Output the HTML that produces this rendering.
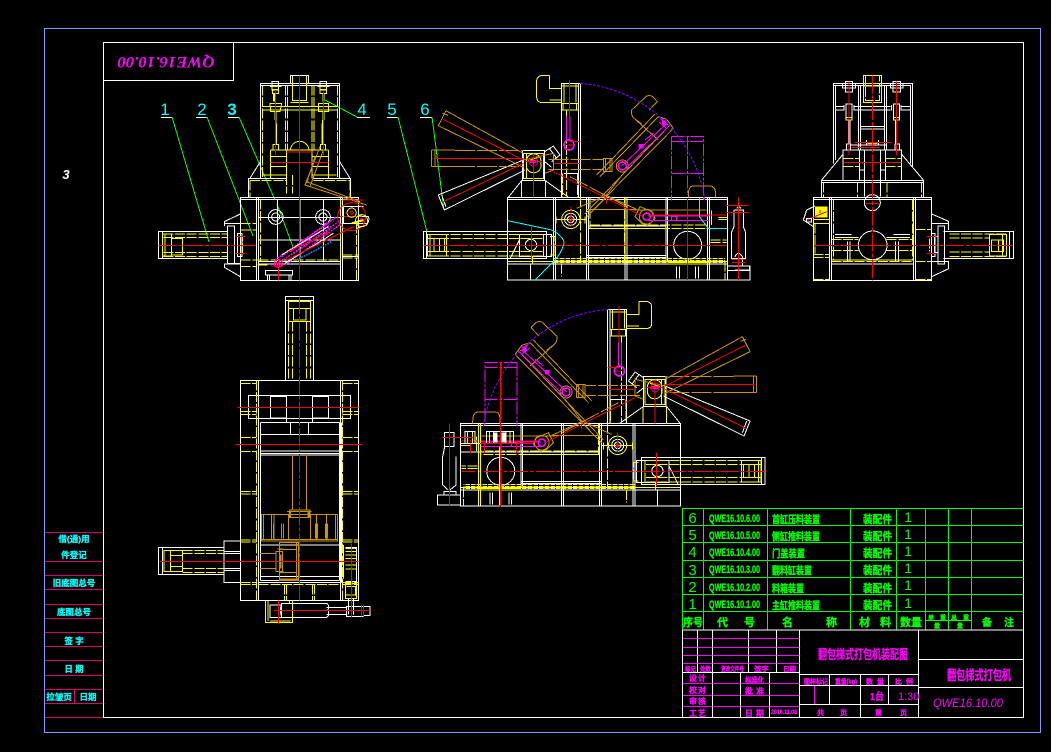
<!DOCTYPE html>
<html><head><meta charset="utf-8"><title>QWE16.10.00</title>
<style>
html,body{margin:0;padding:0;background:#000;width:1051px;height:752px;overflow:hidden}
svg{display:block}
text{font-family:"Liberation Sans","Noto Sans CJK SC",sans-serif}
.g text{fill:#0f0;stroke:#0f0;stroke-width:.35;font-weight:700}
.m text{fill:#f0f;stroke:#f0f;stroke-width:.3;font-weight:700}
.c text{fill:#0ff;stroke:#0ff;stroke-width:.3;font-weight:700;text-anchor:middle}
.w{stroke:#fff}.y{stroke:#ff0}.yd{stroke:#ff0;stroke-dasharray:30 5}.r{stroke:#f00;stroke-dasharray:55 6 12 6}
.rs{stroke:#f00}.o{stroke:#c89400}.od{stroke:#c89400;stroke-dasharray:60 6}.p{stroke:#f0f}.pd{stroke:#f0f;stroke-dasharray:40 5 8 5}
.pu{stroke:#7f00ff;stroke-dasharray:9 4}.cy{stroke:#0ff}
.v{fill:none;stroke-width:3}
</style></head><body>
<svg width="1051" height="752" viewBox="0 0 1051 752" xmlns="http://www.w3.org/2000/svg" shape-rendering="crispEdges">
<rect width="1051" height="752" fill="#000"/>
<defs>
<g id="side" class="v">
<!-- white body -->
<path class="w" d="M293,412H953V660H293Z M293,418H953 M430,412V660 M436,412V660 M530,412V660 M536,412V660 M645,412V660 M651,412V660 M768,412V604 M772,412V604 M893,412V660 M899,412V660 M535,498H770 M535,506H770 M530,587H770 M530,593H770 M293,604H953 M293,612H953 M772,604H893 M800,620V655 M808,620V655 M857,620V655 M865,620V655 M362,612V660"/>
<path class="w" d="M455,412V70H512V412 M505,70V412 M462,340H505 M40,515H410V596H40Z M50,515V596 M328,524H425V590H328V524 M300,596L328,540 M335,362V412 M406,362V412 M335,362H406 M337,360V272H404V360 M335,362L295,412 M406,362L476,412"/>
<circle class="w" cx="833" cy="556" r="42"/><circle class="w" cx="363" cy="555" r="17"/>
<circle class="w" cx="482" cy="478" r="18"/><circle class="w" cx="482" cy="478" r="10"/>
<!-- white open arm -->
<path class="w" d="M85,405L103,450L345,330 M85,405L340,300 M95,405L108,440 M404,275L430,258L450,285L425,305 M418,265L440,295 M404,305L425,322"/>
<!-- yellow -->
<path class="y" d="M418,46H395Q380,50 380,62V112Q380,126 395,128H455 M418,46V85H455 M418,120H455 M455,78H505 M462,70V128 M498,70V128 M455,130H505 M455,150H505 M459,130V150 M500,130V150 M52,524H110V588H52Z M60,524V588 M72,535H104V575H72Z M88,535V575 M340,280H400V355H340Z M350,280V355"/>
<path class="y" d="M432,596H945M432,602H945M432,608H945" stroke-dasharray="14 3" style="stroke:#ff0"/>
<path class="yd" d="M52,524H400 M52,535H400 M52,575H400 M52,588H400 M400,524V590 M420,530H435V585H420 M457,340V412 M503,340V412 M470,150V410 M335,368V412 M406,368V412 M512,412V600 M644,412V600 M540,412V505 M540,495H893 M540,505H893 M300,604H950 M945,604V660 M902,540H950 M902,548H950 M772,604H893 M368,590V612 M455,612V650"/>
<path class="y" d="M455,478A27,27 0 1 1 510,478A27,27 0 1 1 455,478 M435,478H530 M438,470V490 M525,470V490 M355,302L385,292 M350,310A22,22 0 1 0 392,310A22,22 0 1 0 350,310 M773,608H893 M773,612H893" />
<path class="y" d="M925,472H953 M925,478H953 M905,452V495"/>
<!-- orange open arm positions -->
<path class="o" d="M108,152L85,197L340,322 M108,152L340,280 M98,160L114,166 M65,270H135 M65,320H135 M75,270V320 M65,270V320 M340,300L430,280V330L405,340"/>
<path class="od" d="M135,272H340 M135,320H340 M415,298H580 M415,328H580 M480,350L650,440"/>
<path class="o" d="M580,296H606V334H580Z M586,296V334 M600,296V334 M790,205L530,470 M780,195L525,462 M745,170L570,350 M735,162L560,345 M770,178L790,205 M745,170L770,178 M665,150L710,108Q722,105 728,110L742,125L718,150 M665,150Q662,165 672,175L695,192 M672,175L745,240 M500,445L590,405 M590,405L640,340 M530,470L590,410 M670,450H890 M675,470L690,440L725,455L735,475L715,495L695,490Z M530,448H680 M586,405L680,448 M835,405Q835,378 850,378H900Q917,378 917,405V412 M835,412V405"/>
<circle class="o" cx="637" cy="318" r="18"/><circle class="o" cx="710" cy="470" r="22"/>
<!-- magenta -->
<path class="p" d="M635,318L770,190 M645,328L775,200 M750,175L775,195 M745,185L770,205 M705,240L730,220 M712,468H895 M712,482H895 M480,170V245 M470,170V245 M785,470H800V482H785Z"/>
<path class="pd" d="M784,230H880V422 M784,230V422 M784,245H880 M784,340H880 M832,230V405"/>
<g stroke="none" fill="#f0f"><circle cx="477" cy="255" r="15" fill="none" stroke="#f0f" stroke-width="5"/><circle cx="637" cy="318" r="12" fill="none" stroke="#f0f" stroke-width="5"/><circle cx="710" cy="470" r="11" fill="none" stroke="#f0f" stroke-width="5"/><rect x="686" y="252" width="14" height="14"/><rect x="756" y="182" width="14" height="14"/></g>
<!-- red -->
<path class="rs" d="M100,178L340,300 M72,296H340 M100,425L340,310 M345,305H395 M370,280V412 M478,60V175 M478,245H512 M473,255H490 M483,440V500 M365,500V600 M435,310H510 M430,335L700,470 M832,418V660 M590,412V430 M715,465H950"/>
<path class="r" d="M40,556H950 M370,360V412 M832,415V660"/>
<circle class="rs" cx="370" cy="305" r="13"/><circle class="rs" cx="482" cy="478" r="4"/>
<path class="p" d="M360,302H380M360,308H380" />
<!-- purple arc -->
<path class="pu" d="M510,70A408,408 0 0 1 885,425"/>
</g>
</defs>

<!-- frames -->
<rect x="44.500" y="28.500" width="996" height="704" fill="none" stroke="#7f9fff"/>
<rect x="103.500" y="42.500" width="920" height="675" fill="none" stroke="#fff"/>
<rect x="103.500" y="42.500" width="130" height="38" fill="none" stroke="#fff"/>
<text x="166" y="67" transform="rotate(180 166 62)" text-anchor="middle" font-size="16" font-style="italic" font-weight="700" fill="#f0f" textLength="97" lengthAdjust="spacingAndGlyphs" style="font-family:'Liberation Serif',serif">QWE16.10.00</text>
<text x="66" y="179" text-anchor="middle" font-size="13" font-style="italic" font-weight="700" fill="#fff">3</text>

<!-- left stamp -->
<path fill="none" stroke="#d8006c" d="M45,532.500H103M45,561.500H103M45,575.500H103M45,589.500H103M45,604.500H103M45,618.500H103M45,632.500H103M45,646.500H103M45,660.500H103M45,675.500H103M45,689.500H103M45,703.500H103M45,717.500H103M74.500,689V703"/>
<g class="c" font-size="8.500">
<text x="74" y="542">借(通)用</text>
<text x="74" y="558">件登记</text>
<text x="74" y="586">旧底图总号</text>
<text x="74" y="615">底图总号</text>
<text x="74" y="644">签 字</text>
<text x="74" y="672">日 期</text>
<text x="59" y="700">拉皱页</text>
<text x="88" y="700">日期</text>
</g>

<!-- balloons and leaders -->
<g fill="#0ff" font-size="17" text-anchor="middle">
<text x="165" y="115" style="font-family:'Liberation Sans',sans-serif">1</text>
<text x="202" y="115" style="font-family:'Liberation Sans',sans-serif">2</text>
<text x="232" y="115" font-weight="700" style="font-family:'Liberation Sans',sans-serif">3</text>
<text x="362" y="115" style="font-family:'Liberation Sans',sans-serif">4</text>
<text x="392" y="115" style="font-family:'Liberation Sans',sans-serif">5</text>
<text x="425" y="115" style="font-family:'Liberation Sans',sans-serif">6</text>
</g>
<path stroke="#fff" fill="none" d="M161,117.500H172M196,117.500H207M228,117.500H239M357,117.500H370M387,117.500H398M420,117.500H432"/>
<path stroke="#0f0" fill="none" d="M172,117L209,242M207,117L253,236M239,117L275,200M277,204L293,247M357,117L325,100M398,117L427,232M432,117L444,210"/>

<!-- VIEW 1 -->
<g class="v" transform="translate(150,60) scale(.33333)">
<path class="w" d="M331,355V70H569V355 M331,76H569 M421,70V46H476V70 M300,355L331,305 M600,355L569,305 M295,412V355H410 M490,355H602V412 M271,412H626V662H271Z M271,418H626 M320,412V662 M326,412V662 M572,412V662 M578,412V662 M326,472H572 M326,540H572 M326,604H572 M326,612H572 M382,418V604 M450,418V604 M520,418V604 M232,515H25V596H232 M37,515V596 M232,498H254V610H232Z M271,462L223,485V490H271 M271,650L223,622V612H271 M254,610H271 M223,490V498 M262,520H276V590H262Z M347,632H428V645H347Z M352,645V662 M358,645V662 M417,645V662 M423,645V662 M366,64H386V90H366Z M510,64H530V90H510Z M578,590H626 M578,440H640 M578,490L650,490"/>
<circle class="w" cx="377" cy="471" r="22"/><circle class="w" cx="377" cy="471" r="12"/><circle class="w" cx="519" cy="471" r="22"/><circle class="w" cx="519" cy="471" r="12"/>
<path class="y" d="M427,46V122H470V46 M421,128H476 M427,122H470 M361,270H536 M361,270V355 M536,270V355 M361,290H410 M486,290H536 M361,320H410 M486,320H536 M336,345H410 M486,345H560 M410,270V355 M486,270V355 M421,272A28,28 0 0 1 477,272 M337,140H563 M337,150H563 M360,130L395,130L390,155L362,155Z M505,130L535,130L535,155L505,155Z M378,180V252 M518,180V252 M369,254H385V270H369Z M511,254H527V270H511Z M368,88H386V100H368Z M510,88H530V100H510Z M360,80H395 M503,80H538 M37,522H65V588H37Z M45,522V588 M65,535H97V585H65Z"/>
<path stroke-width="6" class="y" d="M372,100V125 M520,100V125 M376,155V180 M520,155V180 M378,190V250 M518,190V250"/>
<path class="yd" d="M337,76V355 M563,76V355 M407,76V270 M413,76V270 M486,76V270 M492,76V270 M410,345V400 M427,345V400 M300,362H410 M490,362H600 M300,362V412 M600,362V412 M331,418V604 M572,418V604 M326,600H572 M40,522H232 M40,533H232 M40,577H232 M40,590H232 M272,490H320 M272,510H320 M272,600H330 M272,620H320 M578,440H626 M620,490V660 M578,585H626 M578,594H626 M262,530H278V580H262 M352,615H320"/>
<path class="o" d="M510,260L465,375L480,380L520,270 M465,375L650,435 M470,365L630,425"/>
<path class="od" d="M495,290L470,370"/>
<path class="r" d="M449,46V662 M25,556H320"/>
<path class="rs" d="M410,276H490 M361,308H536 M449,70V662 M377,90V285 M521,95V285 M257,530H285 M257,580H285 M385,600V662 M578,420H640 M570,470H650 M362,618H400"/>
<circle class="rs" cx="605" cy="470" r="42"/>
<path class="p" stroke-width="4" stroke-dasharray="6 3" d="M375,600L560,470 M385,610L570,482 M395,590L550,478 M405,615L575,490 M420,575L540,495 M415,590L545,505"/>
<path class="w" d="M395,585L535,500 M405,610L550,520"/>
<path stroke="#0080ff" stroke-width="5" stroke-dasharray="5 3" d="M440,600L545,545"/>
<path class="rs" d="M410,600L610,500 M415,575L540,515"/>
<circle class="p" cx="385" cy="610" r="12"/><circle class="rs" cx="385" cy="610" r="6"/>
<circle class="y" cx="605" cy="458" r="14"/><circle class="rs" cx="605" cy="458" r="5"/>
<path class="w" d="M580,440H625V490H580Z M625,468L655,470Q660,480 650,495L620,505"/>
<circle class="y" cx="635" cy="482" r="18"/><circle class="rs" cx="637" cy="480" r="6"/>
<path class="y" stroke-width="6" d="M605,490L640,480"/>
</g>

<!-- VIEW 2 & 5 -->
<use href="#side" transform="translate(410,60) scale(.33333)"/>
<use href="#side" transform="translate(778.400,286) scale(-.33333,.33333)"/>
<!-- cyan only in view 2 -->
<g class="v" transform="translate(410,60) scale(.33333)">
<path class="cy" d="M293,482L425,510Q462,530 462,550Q455,580 430,605L375,660 M868,412V470L895,505H953"/>
<path class="w" d="M975,618H1018V630H975 M952,618H1020V660H952Z M952,632H1020 M972,450H1000V500L1007,518V595H964V518L972,500V450 M975,590Q985,570 997,590V618 M980,445Q986,435 992,445"/>
<path class="rs" d="M985,412V660 M950,436H1016 M950,457H1016 M966,598H1006 M966,608H1006"/>
</g>
<!-- extras on view 5 -->
<g class="v" transform="translate(430,300) scale(.33333)">
<path class="w" d="M92,430H270 M92,456H270 M43,397H72V440H43Z M38,470L44,440 M38,470V555L55,570 M78,470V555L60,570 M23,585H92V615H23Z M42,575H78V585H42Z M105,395H135V430H105Z M170,395H250V430H170Z"/>
<path class="y" d="M113,395V430 M127,395V430 M178,395V430 M190,395V430 M228,395V430 M240,395V430 M145,370V610 M152,370V610 M208,440V615"/>
<path stroke="#fff" stroke-width="14" d="M196,398V428 M222,398V428"/>
<path class="rs" d="M58,370V620 M38,412H130 M150,430H310 M122,430V460 M163,430V460 M212,185V620 M260,430V460"/>
</g>

<!-- VIEW 3 -->
<g class="v" transform="translate(790,60) scale(.33333)">
<path class="w" d="M131,310V70H368V320 M137,300V76H362V310 M160,76H131 M205,76V270 M212,76V270 M283,76V270 M290,76V270 M137,140H162 M137,150H162 M192,140H302 M192,150H302 M332,140H362 M332,150H362 M212,200H283 M212,207H283 M159,270H335V362H159Z M223,270V410 M272,270V410 M208,270V362 M287,270V362 M208,330H223 M272,330H287 M95,412V362H400V412 M95,368H400 M95,360L159,283 M400,360L335,283 M70,412H425V662H70Z M70,418H425 M118,412V662 M124,412V662 M370,412V662 M376,412V662 M124,600H370 M124,612H370 M135,524H185 M310,524H360 M135,532H205 M290,532H360 M172,544V605 M180,544V605 M316,544V605 M325,544V605 M460,515H671V596H460 M658,515V596 M444,498H464V612H444Z M425,490H476V510 M425,462L476,484V490 M425,650L476,626V604H425 M425,520H435V590H425Z M433,530H444V578H433Z"/>
<path class="w" d="M166,64H188V96H166Z M158,70H196V84H158Z M309,64H331V96H309Z M301,70H339V84H301Z M168,132H186V180H168Z M311,132H329V180H311Z M162,135V152 M192,135V152 M305,135V152 M333,135V152 M180,255H290M180,270H290 M170,252H182V270H170Z M315,252H328V270H315Z M230,240V256 M265,240V256 M175,180V252 M180,180V252 M316,180V252 M50,450L40,480L70,500 M50,450L75,438"/>
<circle class="w" cx="247" cy="428" r="24"/><circle class="w" cx="248" cy="556" r="43"/>
<path class="y" d="M220,46H275V128H220Z M220,70H275 M220,78H275 M598,524H650V588H598Z M605,540H640V575H605Z M625,540V575 M637,524V588"/>
<path class="yd" d="M226,46V122H268V46 M160,295H208 M287,295H335 M160,320H208 M287,320H335 M203,368V412 M291,368V412 M100,368V412 M394,368V412 M130,420V600 M367,420V600 M124,538H205 M290,538H370 M124,572H205 M290,572H370 M124,604H370 M376,508H425 M376,604H425 M376,658H425 M75,490V580 M70,583H118 M70,592H118 M70,658H118 M478,522H650 M478,534H600 M478,576H600 M478,590H650 M418,535V575"/>
<path fill="#ff0" stroke="none" d="M75,440H112V472H75Z"/>
<path class="y" d="M70,478H118 M70,490H118"/>
<path class="y" stroke-dasharray="10 3" d="M125,600H370"/>
<path class="y" d="M168,172H186 M168,180H186 M311,172H329 M311,180H329 M232,250H262"/>
<path class="r" d="M247,46V662 M72,556H668"/>
<path class="rs" d="M177,64V285 M319,64V285 M195,247H305 M185,262H270 M162,307H335 M225,430H270 M410,530H440 M410,580H440 M45,482L110,455"/>
<rect class="w" x="50" y="475" width="14" height="11"/><path class="rs" d="M52,480H62M90,450V460"/>
</g>

<!-- VIEW 4 -->
<g class="v" transform="translate(150,295) scale(.33333)">
<path class="w" d="M406,255V4H490V255 M406,16H490 M271,256H626V916H271Z M326,256V916 M571,256V916 M295,301H602V371H295Z M361,304H410V369H361Z M487,304H536V369H487Z M410,304V382H488V304 M331,382H569 M331,418H569 M421,382V418 M475,382V418 M331,382V856 M325,382V862 M569,382V856 M575,382V862 M331,468H569 M331,476H569 M331,480H569 M331,750H569 M331,845H569 M331,856H569 M325,862H575 M25,757H222V839H25Z M37,757V839 M222,738H271V863H222Z M222,770H271 M222,776H271 M222,820H271 M222,826H271"/>
<path class="w" d="M360,930H395V967H360Z M395,925H530Q540,930 534,945Q540,962 530,967H395Q388,945 395,925 M530,938H590V958H530 M590,935H640V965H590Z M640,935H660V962H640 M595,910V958 M610,910V958 M580,750V850 M586,758H620V900H586 M586,860H620"/>
<path class="y" d="M415,20H481V80H415Z M430,40H468V75H430Z M415,40H481 M42,766H98V830H42Z M62,766V830 M62,782H98V815H62 M347,916V982H428V916 M354,916V978 M360,978H422 M418,916V925 M586,760H620 M586,770H620 M586,780H620 M586,790H620 M586,800H620 M586,810H620 M586,822H620 M586,866H620V910H586Z M590,875H616V900H590"/>
<path class="yd" d="M415,80V255 M427,80V255 M470,80V255 M481,80V255 M320,256V916 M577,256V916 M271,265H320 M577,265H626 M271,350H320 M577,350H626 M271,358H320 M577,358H626 M271,428H320 M577,428H626 M271,470H320 M577,470H626 M271,590H320 M577,590H626 M271,597H320 M577,597H626 M271,735H320 M577,735H626 M271,741H320 M577,741H626 M271,862H320 M577,862H626 M271,868H320 M577,868H626 M326,868H571 M403,868V916 M409,868V916 M487,868V916 M493,868V916 M98,766H222 M98,775H222 M98,820H222 M98,832H222"/>
<path class="o" d="M427,478V645 M469,478V645 M335,658H563V738H335Z M340,658V735 M365,658V735 M372,658V735 M415,658V735 M482,658V735 M500,658V735 M530,658V735 M556,658V735 M335,733H563 M418,645H480V668H418Z M411,650H485 M388,742H446V856H388Z M388,763H440 M388,832H440 M440,742V856 M446,742V856 M330,775H380 M330,820H380 M378,770H398V830H378Z M382,762H400 M382,830H400"/>
<path class="od" stroke-dasharray="5 3" d="M364,685V730 M370,685V730 M394,685V730 M400,685V730 M496,685V730 M502,685V730 M526,685V730 M532,685V730"/>
<path class="o" stroke-width="6" d="M392,778V820 M388,853H446 M420,648V668 M476,648V668"/>
<path class="r" d="M449,4V916"/>
<path class="rs" d="M262,337H626 M258,448H638 M28,799H626 M385,916V985 M604,745V968 M372,946H660 M634,930V965 M640,930V965 M449,260V300"/>
</g>

<!-- parts table -->
<g fill="none" stroke="#0f0">
<path d="M682.500,508.500H1023M682.500,525.500H1023M682.500,542.500H1023M682.500,560.500H1023M682.500,577.500H1023M682.500,594.500H1023M682.500,611.500H1023M925,620.500H971"/>
<path d="M682.500,508V630M703.500,508V630M767.500,508V630M850.500,508V630M896.500,508V630M925.500,508V630M948.500,508V630M971.500,508V630"/>
</g>
<g class="g">
<g font-size="15" text-anchor="middle"><text x="692.500" y="523" style="stroke-width:0;font-weight:400">6</text><text x="692.500" y="540" style="stroke-width:0;font-weight:400">5</text><text x="692.500" y="557" style="stroke-width:0;font-weight:400">4</text><text x="692.500" y="575" style="stroke-width:0;font-weight:400">3</text><text x="692.500" y="592" style="stroke-width:0;font-weight:400">2</text><text x="692.500" y="609" style="stroke-width:0;font-weight:400">1</text></g>
<g font-size="11"><text x="709" y="522" textLength="51" lengthAdjust="spacingAndGlyphs">QWE16.10.6.00</text><text x="709" y="539" textLength="51" lengthAdjust="spacingAndGlyphs">QWE16.10.5.00</text><text x="709" y="556" textLength="51" lengthAdjust="spacingAndGlyphs">QWE16.10.4.00</text><text x="709" y="573" textLength="51" lengthAdjust="spacingAndGlyphs">QWE16.10.3.00</text><text x="709" y="591" textLength="51" lengthAdjust="spacingAndGlyphs">QWE16.10.2.00</text><text x="709" y="608" textLength="51" lengthAdjust="spacingAndGlyphs">QWE16.10.1.00</text></g>
<g font-size="10.500"><text x="772" y="523" textLength="48" lengthAdjust="spacingAndGlyphs">首缸压料装置</text><text x="772" y="540" textLength="48" lengthAdjust="spacingAndGlyphs">侧缸推料装置</text><text x="772" y="557" textLength="33" lengthAdjust="spacingAndGlyphs">门盖装置</text><text x="772" y="574" textLength="40" lengthAdjust="spacingAndGlyphs">翻料缸装置</text><text x="772" y="592" textLength="32" lengthAdjust="spacingAndGlyphs">料箱装置</text><text x="772" y="609" textLength="48" lengthAdjust="spacingAndGlyphs">主缸推料装置</text></g>
<g font-size="11"><text x="863" y="523" textLength="29" lengthAdjust="spacingAndGlyphs">装配件</text><text x="863" y="540" textLength="29" lengthAdjust="spacingAndGlyphs">装配件</text><text x="863" y="557" textLength="29" lengthAdjust="spacingAndGlyphs">装配件</text><text x="863" y="574" textLength="29" lengthAdjust="spacingAndGlyphs">装配件</text><text x="863" y="592" textLength="29" lengthAdjust="spacingAndGlyphs">装配件</text><text x="863" y="609" textLength="29" lengthAdjust="spacingAndGlyphs">装配件</text></g>
<g font-size="14" text-anchor="middle"><text x="908" y="522" style="stroke-width:0;font-weight:400">1</text><text x="908" y="539" style="stroke-width:0;font-weight:400">1</text><text x="908" y="556" style="stroke-width:0;font-weight:400">1</text><text x="908" y="573" style="stroke-width:0;font-weight:400">1</text><text x="908" y="590" style="stroke-width:0;font-weight:400">1</text><text x="908" y="608" style="stroke-width:0;font-weight:400">1</text></g>
<g font-size="11"><text x="683" y="626" textLength="20" lengthAdjust="spacingAndGlyphs">序号</text><text x="717" y="626">代</text><text x="744" y="626">号</text><text x="782" y="626">名</text><text x="826" y="626">称</text><text x="859" y="626">材</text><text x="880" y="626">料</text><text x="900" y="626" textLength="22" lengthAdjust="spacingAndGlyphs">数量</text></g>
<g font-size="6"><text x="928" y="620" textLength="18">单重</text><text x="951" y="620" textLength="18">总重</text><text x="934" y="628">量</text><text x="957" y="628">量</text></g>
<text x="982" y="626" font-size="10">备</text><text x="1004" y="626" font-size="10">注</text>
</g>

<!-- title block -->
<g fill="none" stroke="#f0f">
<path d="M682,638.500H799M682,647.500H799M682,655.500H799M682,663.500H799M682,683.500H799M682,695.500H799M682,706.500H799M814.500,685V704"/>
</g>
<g fill="none" stroke="#fff">
<path d="M682.500,630H1023M682.500,630V717M799.500,630V717M918.500,630V717M682,672.500H799M697.500,630V672M712.500,630V717M748.500,630V672M776.500,630V672M740.500,672V717M769.500,672V717M799,674.500H918M799,685.500H918M799,704.500H918M829.500,674V704M860.500,674V717M888.500,674V704M918,659.500H1023M918,687.500H1023"/>
</g>
<g class="m">
<text x="818" y="659" font-size="13" textLength="90" lengthAdjust="spacingAndGlyphs">翻包梯式打包机装配图</text>
<text x="947" y="680" font-size="13.500" textLength="64" lengthAdjust="spacingAndGlyphs">翻包梯式打包机</text>
<text x="933" y="707" font-size="11.500" font-style="italic" textLength="70" lengthAdjust="spacingAndGlyphs" style="stroke-width:0;font-weight:400">QWE16.10.00</text>
<g font-size="6.500"><text x="685" y="671" textLength="11" lengthAdjust="spacingAndGlyphs">标记</text><text x="700" y="671" textLength="11" lengthAdjust="spacingAndGlyphs">处数</text><text x="721" y="671" textLength="23" lengthAdjust="spacingAndGlyphs">更改文件号</text><text x="754" y="671" textLength="15" lengthAdjust="spacingAndGlyphs">签字</text><text x="783" y="671" textLength="13" lengthAdjust="spacingAndGlyphs">日期</text></g>
<g font-size="8"><text x="689" y="681" textLength="17">设计</text><text x="689" y="693" textLength="17">校对</text><text x="689" y="704" textLength="17">审核</text><text x="689" y="716" textLength="17">工艺</text><text x="745" y="683" textLength="19" lengthAdjust="spacingAndGlyphs">标准化</text><text x="745" y="694" textLength="19">批准</text><text x="745" y="716" textLength="19">日期</text></g>
<text x="771" y="714" font-size="6" textLength="26" lengthAdjust="spacingAndGlyphs">2016.11.08</text>
<g font-size="7"><text x="804" y="684" textLength="24" lengthAdjust="spacingAndGlyphs">图样标记</text><text x="835" y="684" textLength="22" lengthAdjust="spacingAndGlyphs">重量(kg)</text><text x="866" y="684" textLength="18">数量</text><text x="895" y="684" textLength="18">比例</text><text x="817" y="715">共</text><text x="840" y="715">页</text><text x="875" y="715">第</text><text x="900" y="715">页</text></g>
<text x="870" y="700" font-size="10" textLength="14" lengthAdjust="spacingAndGlyphs">1台</text>
<text x="898" y="700" font-size="11" style="stroke-width:0;font-weight:400">1:30</text>
</g>
</svg>
</body></html>
